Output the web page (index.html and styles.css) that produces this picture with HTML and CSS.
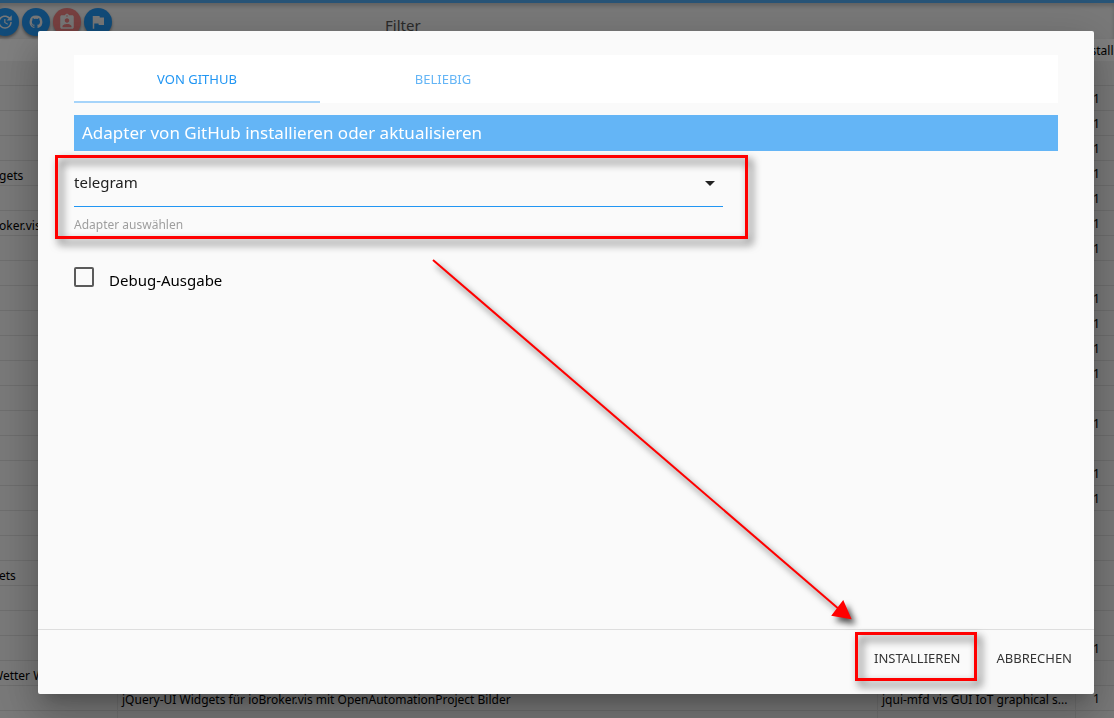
FILE: index.html
```html
<!DOCTYPE html>
<html lang="de">
<head>
    <meta charset="UTF-8">
    <meta name="viewport" content="width=device-width, initial-scale=1.0">
    <title>ioBroker.admin</title>
    <link rel="stylesheet" href="styles.css">
</head>
<body>
    <div class="page">
        <div class="toolbar">
            <div class="toolbar-buttons">
                <button class="round-btn" type="button" aria-label="Auf Updates prüfen">
                    <svg viewBox="0 0 24 24"><path d="M21 10.120h-6.780l2.740-2.820c-2.730-2.700-7.150-2.800-9.880-.100-2.730 2.710-2.730 7.080 0 9.790s7.150 2.710 9.880 0C18.320 15.650 19 14.080 19 12.100h2c0 1.980-.88 4.550-2.640 6.290-3.510 3.480-9.210 3.480-12.720 0-3.500-3.470-3.530-9.110-.020-12.580s9.140-3.470 12.650 0L21 3v7.120zM12.500 8v4.250l3.500 2.080-.720 1.210L11 13V8h1.500z"/></svg>
                </button>
                <button class="round-btn" type="button" aria-label="Von GitHub installieren">
                    <svg viewBox="0 0 24 24"><path d="M12 3.500a8.500 8.500 0 0 0-2.700 16.600c.450.080.600-.200.600-.420v-1.600c-2.300.500-2.900-1-2.900-1-.400-1-.950-1.250-.950-1.250-.750-.500.060-.500.060-.500.850.060 1.300.870 1.300.870.750 1.300 2 .920 2.450.700.080-.550.300-.920.540-1.130-1.900-.200-3.900-.950-3.900-4.200 0-.930.330-1.700.880-2.280-.090-.220-.380-1.080.080-2.250 0 0 .710-.230 2.340.870a8 8 0 0 1 4.260 0c1.620-1.100 2.330-.870 2.330-.870.470 1.170.170 2.030.090 2.250.550.590.870 1.350.870 2.280 0 3.260-2 4-3.900 4.200.300.260.580.780.580 1.570v2.340c0 .220.150.490.590.410A8.500 8.500 0 0 0 12 3.500z"/></svg>
                </button>
                <button class="round-btn red" type="button" aria-label="Expertenmodus">
                    <svg viewBox="0 0 24 24"><path d="M19 3h-4.180C14.400 1.840 13.300 1 12 1s-2.400.840-2.820 2H5c-1.100 0-2 .900-2 2v14c0 1.100.900 2 2 2h14c1.100 0 2-.900 2-2V5c0-1.100-.900-2-2-2zm-7 0c.550 0 1 .450 1 1s-.450 1-1 1-1-.450-1-1 .450-1 1-1zm0 4c1.660 0 3 1.340 3 3s-1.340 3-3 3-3-1.340-3-3 1.340-3 3-3zm6 12H6v-1.400c0-2 4-3.100 6-3.100s6 1.100 6 3.100V19z"/></svg>
                </button>
                <button class="round-btn" type="button" aria-label="Melden">
                    <svg viewBox="0 0 24 24"><path d="M14.400 6L14 4H5v17h2v-7h5.600l.400 2h7V6z"/></svg>
                </button>
            </div>
            <input class="filter" type="text" placeholder="Filter" aria-label="Filter">
        </div>

        <table class="adapters">
            <colgroup>
                <col class="col-name">
                <col>
                <col class="col-keys">
                <col class="col-install">
            </colgroup>
            <thead>
                <tr><th></th><th></th><th></th><th>Install</th></tr>
            </thead>
            <tbody>
                <tr><td></td><td></td><td></td><td></td></tr>
                <tr><td></td><td></td><td></td><td class="num">1</td></tr>
                <tr><td></td><td></td><td></td><td class="num">1</td></tr>
                <tr><td></td><td></td><td></td><td class="num">1</td></tr>
                <tr><td class="name">gets</td><td></td><td></td><td class="num">1</td></tr>
                <tr><td></td><td></td><td></td><td class="num">1</td></tr>
                <tr><td class="name">oker.vis</td><td></td><td></td><td class="num">1</td></tr>
                <tr><td></td><td></td><td></td><td class="num">1</td></tr>
                <tr><td></td><td></td><td></td><td></td></tr>
                <tr><td></td><td></td><td></td><td class="num">1</td></tr>
                <tr><td></td><td></td><td></td><td class="num">1</td></tr>
                <tr><td></td><td></td><td></td><td class="num">1</td></tr>
                <tr><td></td><td></td><td></td><td class="num">1</td></tr>
                <tr><td></td><td></td><td></td><td></td></tr>
                <tr><td></td><td></td><td></td><td class="num">1</td></tr>
                <tr><td></td><td></td><td></td><td></td></tr>
                <tr><td></td><td></td><td></td><td class="num">1</td></tr>
                <tr><td></td><td></td><td></td><td class="num">1</td></tr>
                <tr><td></td><td></td><td></td><td></td></tr>
                <tr><td></td><td></td><td></td><td></td></tr>
                <tr><td class="name">ets</td><td></td><td></td><td></td></tr>
                <tr><td></td><td></td><td></td><td></td></tr>
                <tr><td></td><td></td><td></td><td></td></tr>
                <tr><td></td><td></td><td></td><td class="num">1</td></tr>
                <tr><td class="name wide">Wetter W</td><td></td><td></td><td></td></tr>
                <tr><td></td><td>jQuery-UI Widgets für ioBroker.vis mit OpenAutomationProject Bilder</td><td>jqui-mfd vis GUI IoT graphical s...</td><td class="num">1</td></tr>
                <tr><td></td><td></td><td></td><td></td></tr>
            </tbody>
        </table>
    </div>

    <div class="overlay">
        <div class="modal" role="dialog" aria-labelledby="modal-title">
            <div class="modal-content">
                <nav class="tabs">
                    <a class="tab active" href="#github">Von GitHub</a>
                    <a class="tab" href="#custom">Beliebig</a>
                </nav>
                <h1 class="title" id="modal-title">Adapter von GitHub installieren oder aktualisieren</h1>

                <div class="field marked">
                    <select id="adapter">
                        <option>telegram</option>
                    </select>
                    <svg class="caret" viewBox="0 0 10 5"><path d="M0 0h10L5 5z"/></svg>
                    <label for="adapter">Adapter auswählen</label>
                </div>

                <div class="check">
                    <input type="checkbox" id="debug">
                    <label for="debug">Debug-Ausgabe</label>
                </div>
            </div>

            <div class="modal-footer">
                <button class="btn-flat marked" type="button">Installieren</button>
                <button class="btn-flat" type="button">Abbrechen</button>
            </div>

            <svg class="arrow" viewBox="0 0 430 370">
                <path class="arrow-line" d="M3 3L410 353"/>
                <path class="arrow-head" d="M420 361L403 358L413 345z"/>
            </svg>
        </div>
    </div>
</body>
</html>
```

FILE: styles.css
```css
* {
    margin: 0;
    padding: 0;
    box-sizing: border-box;
}

body {
    font-family: "Noto Sans", "Open Sans", sans-serif;
    font-size: 12px;
    color: #000;
    background: #f2f2f2;
    height: 100vh;
    overflow: hidden;
}

button,
input,
select {
    font-family: inherit;
}

/* page behind the dialog */
.page {
    height: 100vh;
    overflow: hidden;
    border-top: 3px solid #4fa9ee;
}

.toolbar {
    display: flex;
    align-items: center;
    height: 36px;
    box-shadow: inset 0 3px 4px rgba(0, 0, 0, 0.2);
}

.toolbar-buttons {
    display: flex;
    gap: 3px;
    flex: none;
    width: 385px;
    padding-top: 2px;
    margin-left: -9px;
}

.round-btn {
    display: flex;
    align-items: center;
    justify-content: center;
    width: 28px;
    height: 28px;
    border: none;
    border-radius: 50%;
    background: #2196f3;
    box-shadow: 0 2px 3px rgba(0, 0, 0, 0.4);
}

.round-btn.red {
    background: #f08080;
}

.round-btn svg {
    width: 18px;
    height: 18px;
    fill: #eee;
}

.filter {
    width: 200px;
    height: 28px;
    margin: 8px 0 0 9px;
    border: none;
    background: none;
    font-size: 15px;
}

.filter::placeholder {
    color: #555;
}

.adapters {
    width: 100%;
    table-layout: fixed;
    border-collapse: separate;
    border-spacing: 0;
}

.col-name {
    width: 118px;
}

.col-keys {
    width: 198px;
}

.col-install {
    width: 38px;
}

.adapters th {
    height: 22px;
    padding: 2px 0 0 3px;
    background: #fff;
    font-weight: normal;
    font-size: 12px;
    line-height: 20px;
    text-align: left;
    white-space: nowrap;
}

.adapters td {
    height: 25px;
    padding: 4px 4px 0;
    border-right: 1px solid #e0e0e0;
    border-bottom: 1px solid #dcdcdc;
    line-height: 20px;
    white-space: nowrap;
}

.adapters td:last-child {
    border-right: none;
}

.adapters td.name {
    padding: 6px 0 0;
    line-height: 18px;
    text-indent: -1px;
}

.adapters td.wide {
    text-indent: -8px;
}

.adapters td.num {
    padding: 2px 0 0 17px;
    line-height: 22px;
}

/* dialog */
.overlay {
    position: fixed;
    inset: 0;
    display: flex;
    padding: 31px 20px 24px 38px;
    background: rgba(0, 0, 0, 0.5);
}

.modal {
    position: relative;
    display: flex;
    flex-direction: column;
    flex: 1;
    background: #fafafa;
    border-radius: 2px;
    box-shadow: 0 24px 38px 3px rgba(0, 0, 0, 0.14), 0 9px 46px 8px rgba(0, 0, 0, 0.12), 0 11px 15px -7px rgba(0, 0, 0, 0.2);
}

.modal-content {
    flex: 1;
    padding: 24px 36px;
}

.tabs {
    display: flex;
    height: 48px;
    background: #fff;
}

.tab {
    width: 25%;
    color: #64b5f6;
    font-size: 13px;
    line-height: 48px;
    text-align: center;
    text-decoration: none;
    text-transform: uppercase;
}

.tab.active {
    color: #2196f3;
    border-bottom: 2px solid #a6d4fa;
}

.title {
    margin-top: 12px;
    padding-left: 8px;
    background: #64b5f6;
    color: #fff;
    font-size: 17px;
    font-weight: normal;
    line-height: 36px;
}

.field {
    display: flex;
    flex-direction: column;
    width: 66%;
    margin-top: 8px;
}

.field select {
    height: 48px;
    padding-bottom: 2px;
    border: none;
    border-bottom: 1px solid #2196f3;
    border-radius: 0;
    background: none;
    appearance: none;
    color: #222;
    font-size: 15px;
}

.field label {
    margin-top: 8px;
    color: #9e9e9e;
    font-size: 12px;
    line-height: 20px;
}

.caret {
    position: absolute;
    right: 8px;
    top: 22px;
    width: 10px;
    height: 5px;
    fill: #222;
}

.check {
    display: flex;
    align-items: flex-start;
    gap: 15px;
    margin-top: 32px;
}

.check input {
    width: 20px;
    height: 20px;
    border: 2px solid #5a5a5a;
    border-radius: 2px;
    appearance: none;
}

.check label {
    padding-top: 3px;
    font-size: 15px;
    line-height: 20px;
}

.modal-footer {
    display: flex;
    justify-content: flex-end;
    align-items: center;
    gap: 4px;
    height: 65px;
    padding: 0 6px 8px;
    border-top: 1px solid #dedede;
}

.btn-flat {
    height: 36px;
    padding: 0 16px;
    border: none;
    background: none;
    color: #343434;
    font-size: 13px;
    text-transform: uppercase;
}

/* red marks */
.marked {
    position: relative;
}

.marked::after {
    content: "";
    position: absolute;
    border: 3px solid #f00;
    filter: drop-shadow(4px 5px 4px rgba(0, 0, 0, 0.7));
    pointer-events: none;
}

.field.marked::after {
    inset: -4px -25px -4px -19px;
}

.btn-flat.marked::after {
    inset: -8px 0 -5px -3px;
}

.arrow {
    position: absolute;
    left: 392px;
    top: 226px;
    width: 430px;
    height: 370px;
    overflow: visible;
    filter: drop-shadow(4px 5px 3px rgba(0, 0, 0, 0.7));
    pointer-events: none;
}

.arrow-line {
    stroke: #f00;
    stroke-width: 2;
}

.arrow-head {
    fill: #f00;
    stroke: #f00;
    stroke-width: 2;
}
```
